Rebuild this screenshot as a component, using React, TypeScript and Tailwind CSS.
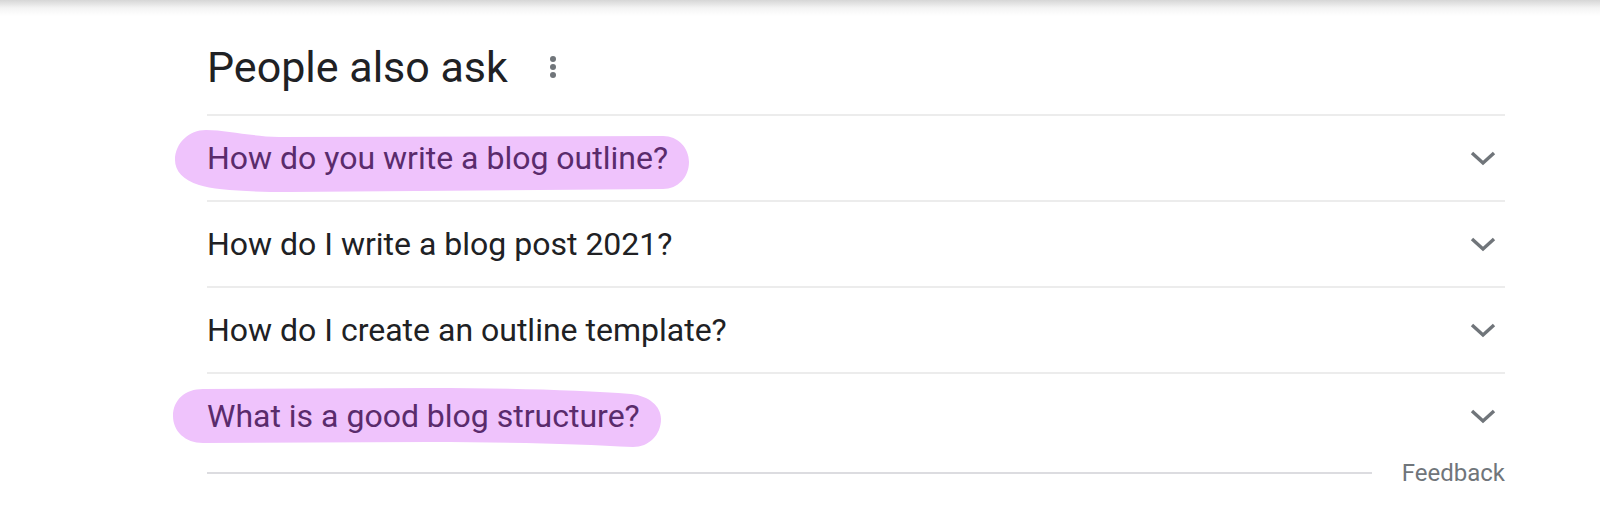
type Mark = { left: number; top: number; width: number; height: number; d: string };
type Question = { text: string; mark?: Mark };

const questions: Question[] = [
  {
    text: "How do you write a blog outline?",
    mark: {
      left: -32,
      top: -13,
      width: 514,
      height: 64,
      d: "M31 1 C52 1 72 7 104 8 L488 7 C503 7 514 19 514 33 C514 48 503 60 488 60 L114 63 C72 63 40 61 24 56 C8 51 0 42 0 31 C0 14 14 1 31 1 Z",
    },
  },
  { text: "How do I write a blog post 2021?" },
  { text: "How do I create an outline template?" },
  {
    text: "What is a good blog structure?",
    mark: {
      left: -34,
      top: -13,
      width: 488,
      height: 60,
      d: "M30 2 L255 1 C338 1 408 3 458 7 C476 9 488 19 488 32 C488 48 476 60 460 60 C408 57 338 55 255 55 L30 56 C12 56 0 44 0 29 C0 13 12 2 30 2 Z",
    },
  },
];

function MoreDots() {
  return (
    <svg width="8" height="24" viewBox="0 0 8 24" className="text-[#70757a]">
      <circle cx="4" cy="4" r="3" fill="currentColor" />
      <circle cx="4" cy="12" r="3" fill="currentColor" />
      <circle cx="4" cy="20" r="3" fill="currentColor" />
    </svg>
  );
}

function Chevron() {
  return (
    <svg width="26" height="16" viewBox="0 0 26 16" className="mr-[9px] text-[#70757a]">
      <path d="M2 3 L13 13 L24 3" fill="none" stroke="currentColor" strokeWidth="3.4" />
    </svg>
  );
}

export default function App() {
  return (
    <div className="min-h-[518px] bg-white" style={{ fontFamily: "Roboto, 'Liberation Sans', sans-serif" }}>
      {/* top edge shadow */}
      <div className="h-[16px] bg-linear-to-b from-[#d6d6d6] via-[#f4f4f4] to-white" />

      <div className="ml-[207px] w-[1298px]">
        <div className="flex h-[98px] items-center gap-[41px] pt-[4px]">
          <h2 className="text-[43px] leading-none text-[#202124]">People also ask</h2>
          <MoreDots />
        </div>

        {questions.map((q, i) => (
          <div key={i} className="flex h-[86px] items-center justify-between border-t-2 border-[#ececec]">
            <span className={`relative text-[32px] leading-none ${q.mark ? "text-[#5a2b6c]" : "text-[#202124]"}`}>
              {q.mark && (
                <svg
                  className="absolute"
                  style={{ left: q.mark.left, top: q.mark.top }}
                  width={q.mark.width}
                  height={q.mark.height}
                  viewBox={`0 0 ${q.mark.width} ${q.mark.height}`}
                >
                  <path d={q.mark.d} fill="#efc3fc" />
                </svg>
              )}
              <span className="relative">{q.text}</span>
            </span>
            <Chevron />
          </div>
        ))}

        <div className="flex h-[30px] items-center">
          <div className="h-[2px] flex-1 bg-[#dcdce0]" />
          <span className="ml-[30px] text-[24px] text-[#70757a]">Feedback</span>
        </div>
      </div>
    </div>
  );
}
